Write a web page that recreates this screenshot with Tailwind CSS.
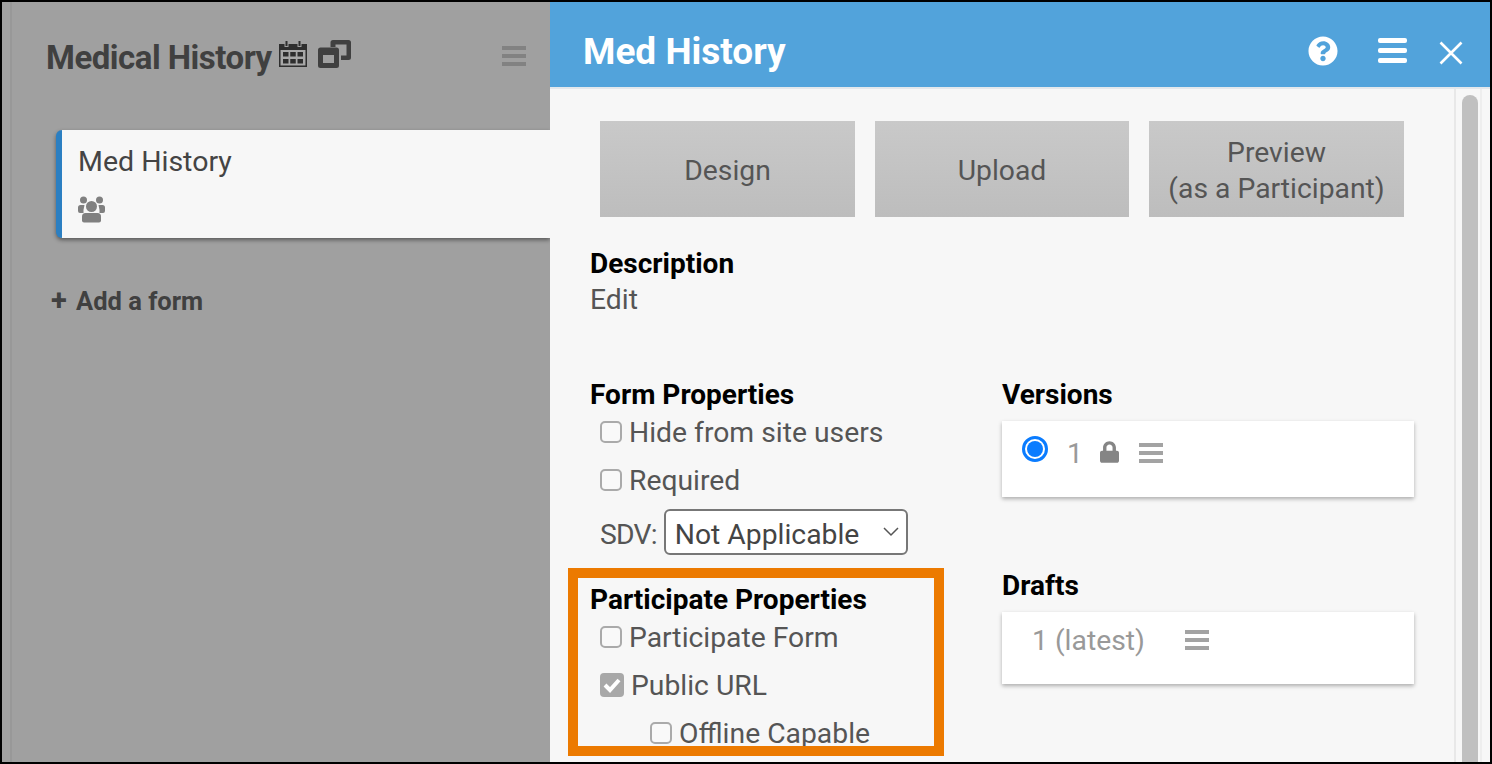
<!DOCTYPE html>
<html lang="en">
<head>
    <meta charset="UTF-8">
    <title>Med History</title>
    <script src="https://cdn.jsdelivr.net/npm/@tailwindcss/browser@4"></script>
</head>
<body class="font-['Roboto',sans-serif] overflow-hidden">
  <div class="relative flex h-[764px] w-[1492px] overflow-hidden border-2 border-black bg-[#a0a0a0]">

    <!-- Left panel -->
    <div class="w-[548px] shrink-0 border-l-2 border-transparent pl-[6px]">
      <div class="h-full border-l-2 border-[#989898] pt-[35px]">
        <div class="flex items-start pl-[34px] pr-[24px]">
          <h1 class="text-[33px] leading-[42px] font-bold tracking-[-0.5px] text-[#404040]">Medical History</h1>
          <svg class="ml-[7px] mt-[4px] h-[26px] w-[28px]" viewBox="0 0 28 26">
            <path fill="#a8a8a8" d="M2 8h24v16H2z"/>
            <path fill="#2e2e2e" d="M0 3h5.500v3h4V3h9v3h4V3H28v23H0zM1.500 9v15.500h25V9z"/>
            <path fill="#2e2e2e" d="M6.500 0h2v5h-2zM19.500 0h2v5h-2z"/>
            <path fill="#2e2e2e" d="M4 11h5.500v4.500H4zM11.250 11h5.500v4.500h-5.500zM18.500 11H24v4.500h-5.500zM4 18h5.500v4.500H4zM11.250 18h5.500v4.500h-5.500zM18.500 18H24v4.500h-5.500z"/>
          </svg>
          <svg class="ml-[11px] mt-[3px] h-[28px] w-[33px]" viewBox="0 0 33 28" fill="#404040">
            <path d="M12.500 7V2.500A2.500 2.500 0 0 1 15 0h15.500A2.500 2.500 0 0 1 33 2.500v15a2.500 2.500 0 0 1-2.500 2.500H23v-4.500h5.500v-11h-11V7z"/>
            <path fill-rule="evenodd" d="M2.500 7.500h16A2.500 2.500 0 0 1 21 10v15.500a2.500 2.500 0 0 1-2.500 2.500h-16A2.500 2.500 0 0 1 0 25.500V10a2.500 2.500 0 0 1 2.500-2.500zM5 15v8h11v-8z"/>
          </svg>
          <div class="ml-auto mt-[9px] flex w-[24px] flex-col gap-[4px]">
            <div class="h-[4px] bg-[#828282]"></div>
            <div class="h-[4px] bg-[#828282]"></div>
            <div class="h-[4px] bg-[#828282]"></div>
          </div>
        </div>

        <!-- Form card -->
        <div class="ml-[44px] mt-[51px] flex h-[108px] rounded-l-md border-l-[6px] border-[#2b7fc2] bg-[#f7f7f7] shadow-[0_2px_4px_rgba(0,0,0,0.45)]">
          <div class="pl-[16px] pt-[14px]">
            <div class="text-[28.5px] leading-[36px] text-[#444444]">Med History</div>
            <svg class="mt-[16px] h-[27px] w-[27px]" viewBox="0 0 27 27" fill="#808080">
              <circle cx="5.500" cy="4" r="3.500"/>
              <circle cx="21.500" cy="4" r="3.500"/>
              <path d="M0 11.500q0-2.500 2.500-2.500h4l-1 5v3H2q-2 0-2-2zM27 11.500q0-2.500-2.500-2.500h-4l1 5v3H25q2 0 2-2z"/>
              <circle cx="13.500" cy="10.500" r="5.500"/>
              <path d="M4 20.500q0-3.500 3.500-3.500h12q3.500 0 3.500 3.500v4q0 2-2 2H6q-2 0-2-2z"/>
            </svg>
          </div>
        </div>

        <div class="ml-[39px] mt-[44px] flex items-baseline leading-[36px] font-bold text-[#404040]">
          <span class="w-[25px] text-[29px]">+</span>
          <span class="text-[25.5px]">Add a form</span>
        </div>
      </div>
    </div>

    <!-- Right panel -->
    <div class="flex min-w-0 flex-1 flex-col bg-[#f7f7f7]">
      <div class="flex h-[87px] shrink-0 items-start border-b-[2px] border-[#e3e8ec] bg-[#52a3db] pl-[33px]">
        <h2 class="mt-[28px] text-[37px] leading-[44px] font-bold text-white">Med History</h2>
        <svg class="ml-auto mt-[34px] h-[30px] w-[30px]" viewBox="0 0 512 512" fill="#ffffff">
          <path d="M504 256c0 136.997-111.043 248-248 248S8 392.997 8 256C8 119.083 119.043 8 256 8s248 111.083 248 248zM262.655 90c-54.497 0-89.255 22.957-116.549 63.758-3.536 5.286-2.353 12.415 2.715 16.258l34.699 26.31c5.205 3.947 12.621 3.008 16.665-2.122 17.864-22.658 30.113-35.797 57.303-35.797 20.429 0 45.698 13.148 45.698 32.958 0 14.976-12.363 22.667-32.534 33.976C247.128 238.528 216 254.941 216 296v4c0 6.627 5.373 12 12 12h56c6.627 0 12-5.373 12-12v-1.333c0-28.462 83.186-29.647 83.186-106.667 0-58.002-60.165-102-116.531-102zM256 338c-25.365 0-46 20.635-46 46 0 25.364 20.635 46 46 46s46-20.636 46-46c0-25.365-20.635-46-46-46z"/>
        </svg>
        <div class="ml-[40px] mt-[36px] flex w-[29px] flex-col gap-[5px]">
          <div class="h-[5px] rounded-[2px] bg-white"></div>
          <div class="h-[5px] rounded-[2px] bg-white"></div>
          <div class="h-[5px] rounded-[2px] bg-white"></div>
        </div>
        <svg class="ml-[32px] mr-[27px] mt-[39px] h-[24px] w-[24px]" viewBox="0 0 24 24" stroke="#ffffff" stroke-width="2.600">
          <path d="M1.500 1.500l21 21M22.500 1.500l-21 21"/>
        </svg>
      </div>

      <div class="flex min-h-0 flex-1">
        <!-- Scrolling content -->
        <div class="w-[906px] shrink-0 border-r-2 border-[#e8e8e8] pt-[32px]">
          <div class="flex gap-[20px] pl-[50px]">
            <div class="flex h-[96px] w-[255px] items-center justify-center bg-gradient-to-b from-[#c9c9c9] to-[#bdbdbd] pt-[4px] text-[28.3px] text-[#555555]">Design</div>
            <div class="flex h-[96px] w-[254px] items-center justify-center bg-gradient-to-b from-[#c9c9c9] to-[#bdbdbd] pt-[4px] text-[28.3px] text-[#555555]">Upload</div>
            <div class="flex h-[96px] w-[255px] items-center justify-center bg-gradient-to-b from-[#c9c9c9] to-[#bdbdbd] pt-[4px] text-center text-[28.3px] leading-[36px] text-[#555555]">Preview<br>(as a Participant)</div>
          </div>

          <div class="mt-[29px] pl-[40px]">
            <div class="text-[28px] leading-[36px] font-bold text-black">Description</div>
            <div class="text-[28.3px] leading-[36px] text-[#555555]">Edit</div>
          </div>

          <div class="mt-[59px] flex pl-[40px]">
            <div class="w-[412px]">
              <div class="text-[28px] leading-[36px] font-bold text-black">Form Properties</div>
              <div class="mt-[2px] flex h-[36px] items-center pl-[10px] text-[28.3px] text-[#555555]">
                <span class="-mt-[2px] h-[22px] w-[22px] rounded-[5px] border-2 border-[#aaaaaa] bg-[#f9f9f9]"></span>
                <span class="ml-[7px]">Hide from site users</span>
              </div>
              <div class="mt-[12px] flex h-[36px] items-center pl-[10px] text-[28.3px] text-[#555555]">
                <span class="-mt-[2px] h-[22px] w-[22px] rounded-[5px] border-2 border-[#aaaaaa] bg-[#f9f9f9]"></span>
                <span class="ml-[7px]">Required</span>
              </div>
              <div class="mt-[10px] flex items-center pl-[10px] text-[28.3px] leading-[36px] text-[#555555]">
                <span class="pt-[5px] tracking-[-0.8px]">SDV:</span>
                <div class="ml-[7px] flex h-[46px] w-[244px] items-center justify-between rounded-md border-2 border-[#777777] bg-white pl-[9px] pr-[7px] text-[#444444]">
                  <span class="pt-[5px]">Not Applicable</span>
                  <svg class="h-[10px] w-[16px]" viewBox="0 0 16 10" fill="none" stroke="#555555" stroke-width="1.500"><path d="M1 1l7 7 7-7"/></svg>
                </div>
              </div>

              <div class="mt-[27px] text-[28px] leading-[36px] font-bold text-black">Participate Properties</div>
              <div class="mt-[2px] flex h-[36px] items-center pl-[10px] text-[28.3px] text-[#555555]">
                <span class="-mt-[2px] h-[22px] w-[22px] rounded-[5px] border-2 border-[#aaaaaa] bg-[#f9f9f9]"></span>
                <span class="ml-[7px]">Participate Form</span>
              </div>
              <div class="mt-[12px] flex h-[36px] items-center pl-[10px] text-[28.3px] text-[#555555]">
                <span class="-mt-[2px] flex h-[24px] w-[24px] items-center justify-center rounded-[4px] bg-[#a8a8a8]">
                  <svg class="h-[16px] w-[18px]" viewBox="0 0 18 16" fill="none" stroke="#ffffff" stroke-width="4"><path d="M2 8l5 5 9-10"/></svg>
                </span>
                <span class="ml-[7px]">Public URL</span>
              </div>
              <div class="mt-[12px] flex h-[36px] items-center pl-[60px] text-[28.3px] text-[#555555]">
                <span class="-mt-[2px] h-[22px] w-[22px] rounded-[5px] border-2 border-[#aaaaaa] bg-[#f9f9f9]"></span>
                <span class="ml-[7px]">Offline Capable</span>
              </div>
            </div>

            <div class="w-[412px]">
              <div class="text-[28px] leading-[36px] font-bold text-black">Versions</div>
              <div class="mt-[8px] flex h-[76px] items-start bg-white pl-[20px] pt-[15px] shadow-[0_2px_4px_rgba(0,0,0,0.3)]">
                <span class="flex h-[26px] w-[26px] items-center justify-center rounded-full border-[3px] border-[#0a7cff] bg-white">
                  <span class="h-[16px] w-[16px] rounded-full bg-[#0a7cff]"></span>
                </span>
                <span class="ml-[19px] pt-[1px] text-[28.3px] leading-[34px] text-[#999999]">1</span>
                <svg class="ml-[17px] mt-[5px] h-[22px] w-[19px]" viewBox="0 0 448 512" fill="#858585">
                  <path d="M400 224h-24v-72C376 68.2 307.800 0 224 0S72 68.200 72 152v72H48c-26.500 0-48 21.500-48 48v192c0 26.500 21.500 48 48 48h352c26.500 0 48-21.500 48-48V272c0-26.500-21.500-48-48-48zm-104 0H152v-72c0-39.700 32.300-72 72-72s72 32.300 72 72v72z"/>
                </svg>
                <div class="ml-[20px] mt-[7px] flex w-[24px] flex-col gap-[4px]">
                  <div class="h-[4px] bg-[#a3a3a3]"></div>
                  <div class="h-[4px] bg-[#a3a3a3]"></div>
                  <div class="h-[4px] bg-[#a3a3a3]"></div>
                </div>
              </div>

              <div class="mt-[71px] text-[28px] leading-[36px] font-bold text-black">Drafts</div>
              <div class="mt-[8px] flex h-[72px] items-start bg-white pl-[30px] pt-[12px] shadow-[0_2px_4px_rgba(0,0,0,0.3)]">
                <span class="text-[28.3px] leading-[34px] text-[#999999]">1 (latest)</span>
                <div class="ml-[40px] mt-[6px] flex w-[24px] flex-col gap-[4px]">
                  <div class="h-[4px] bg-[#a3a3a3]"></div>
                  <div class="h-[4px] bg-[#a3a3a3]"></div>
                  <div class="h-[4px] bg-[#a3a3a3]"></div>
                </div>
              </div>
            </div>
          </div>
        </div>

        <!-- Scrollbar -->
        <div class="w-[26px] shrink-0 border-r-2 border-[#eeeeee] pl-[6px] pt-[6px]">
          <div class="h-full w-[16px] rounded-t-lg bg-[#c0c0c0]"></div>
        </div>
      </div>
    </div>

    <!-- Callout -->
    <div class="absolute left-[566px] top-[566px] h-[188px] w-[376px] border-[10px] border-[#ec7a00]"></div>
  </div>
</body>
</html>
